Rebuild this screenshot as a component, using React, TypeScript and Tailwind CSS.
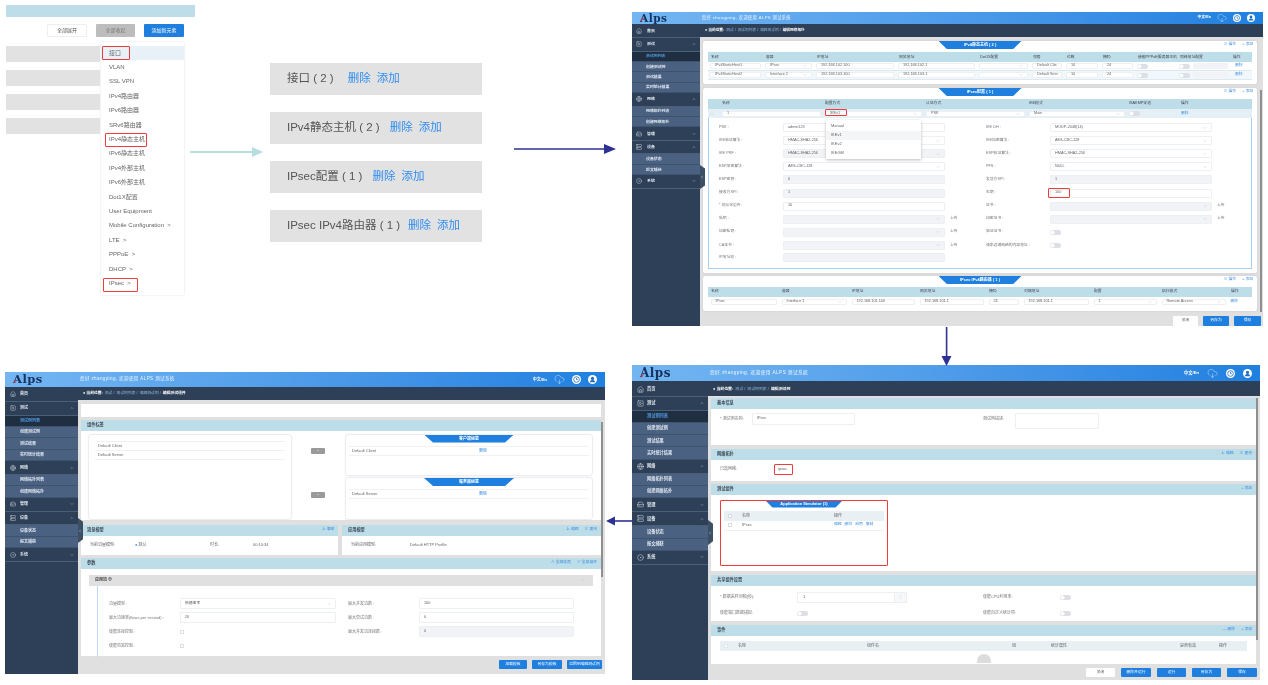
import React from "react";
import { Home, SquarePlay, Globe, Server, CircleDot, HardDrive, CloudDownload, ChevronDown, ChevronUp, ChevronLeft } from "lucide-react";

type Nav = { t: string; icon: React.ElementType; open?: boolean; sub?: string[]; active?: string };

const NAV: Nav[] = [
  { t: "首页", icon: Home },
  { t: "测试", icon: SquarePlay, open: true, sub: ["测试例列表", "创建测试例", "测试结果", "实时统计结果"], active: "测试例列表" },
  { t: "网络", icon: Globe, open: true, sub: ["网络拓扑列表", "创建网络拓扑"] },
  { t: "管理", icon: HardDrive, open: false },
  { t: "设备", icon: Server, open: true, sub: ["设备状态", "报文捕获"] },
  { t: "系统", icon: CircleDot, open: false },
];

function Sidebar({ w, mh, sh, ic, tx, pl, ipl, spl }: { w: string; mh: string; sh: string; ic: string; tx: string; pl: string; ipl: string; spl: string }) {
  return (
    <aside className={`${w} ${tx} shrink-0 bg-[#2e4057] text-[#dfe6ee]`}>
      {NAV.map((n) => {
        const Icon = n.icon;
        return (
          <div key={n.t}>
            <div className={`${mh} ${ipl} flex items-center border-b border-[#4a5e74] pr-[4px]`}>
              <Icon className={`${ic} shrink-0`} strokeWidth={1.6} />
              <span className={`${pl} flex-1 font-bold`}>{n.t}</span>
              {n.open === true && <ChevronUp className="h-[4px] w-[4px] text-[#9fb0c2]" strokeWidth={3} />}
              {n.open === false && <ChevronDown className="h-[4px] w-[4px] text-[#9fb0c2]" strokeWidth={3} />}
            </div>
            {n.sub?.map((s) => (
              <div
                key={s}
                className={`${sh} ${spl} flex items-center border-b border-[#3e536c] font-bold ${s === n.active ? "bg-[#1f2e40] text-[#4f97dd]" : "bg-[#4a6182]"}`}
              >
                {s}
              </div>
            ))}
          </div>
        );
      })}
    </aside>
  );
}

function HeaderBar({ h, logo, lw, tx, rtx, pl, gap, ico, cloud }: { h: string; logo: string; lw: string; tx: string; rtx: string; pl: string; gap: string; ico: string; cloud: string }) {
  return (
    <header className={`${h} flex shrink-0 items-center bg-gradient-to-r from-[#74b6f2] to-[#1f80e0] text-white`}>
      <div className={`${lw} ${logo} ${pl} shrink-0 font-['DejaVu_Serif',serif] font-bold leading-none tracking-[0.5px] text-[#16325f]`}>
        <span className="relative">
          A
          <span className="absolute bottom-[30%] left-[5%] h-[1px] w-[45%] -rotate-45 bg-[#d33]" />
        </span>
        lps
      </div>
      <div className={`${tx} ml-[2px] flex-1 tracking-[0.4px] text-[#eef6ff]`}>您好 zhangping, 欢迎使用 ALPS 测试系统</div>
      <div className={`${rtx} ${gap} flex items-center pr-[8px] font-bold`}>
        <span>中文/En</span>
        <CloudDownload className={`${cloud} text-[#dcecff]`} strokeWidth={1} />
        <svg viewBox="0 0 16 16" className={ico}>
          <circle cx="8" cy="8" r="8" fill="#fff" />
          <circle cx="8" cy="8" r="5" fill="none" stroke="#1f6fc4" strokeWidth="1.4" />
          <path d="M8 5v3.4h2.2" fill="none" stroke="#1f6fc4" strokeWidth="1.4" />
        </svg>
        <svg viewBox="0 0 16 16" className={ico}>
          <circle cx="8" cy="8" r="8" fill="#fff" />
          <circle cx="8" cy="6" r="2.8" fill="#1f6fc4" />
          <path d="M3 13c1-3 3-4 5-4s4 1 5 4z" fill="#1f6fc4" />
        </svg>
      </div>
    </header>
  );
}

function Crumb({ h, tx, path }: { h: string; tx: string; path: string[] }) {
  return (
    <div className={`${h} ${tx} flex shrink-0 items-center bg-[#2e4057] pl-[5px] text-[#8fb8dd]`}>
      <span className="font-bold text-white">● 当前位置:</span>
      {path.map((p, i) => (
        <span key={p} className={`ml-[2px] ${i === path.length - 1 ? "font-bold text-white" : ""}`}>
          {p}
          {i < path.length - 1 ? " /" : ""}
        </span>
      ))}
    </div>
  );
}

function Trap({ w, h, t }: { w: string; h: string; t: string }) {
  return (
    <div className={`${w} ${h} mx-auto flex items-center justify-center bg-[#1e7fdf] text-[4px] font-bold text-white [clip-path:polygon(0_0,100%_0,90%_100%,10%_100%)]`}>
      {t}
    </div>
  );
}

function Chev() {
  return <ChevronDown className="h-[4px] w-[4px] shrink-0 text-[#b8bec6]" strokeWidth={2.4} />;
}

function Box({ t, sel, off, c = "" }: { t?: string; sel?: boolean; off?: boolean; c?: string }) {
  return (
    <div className={`bx flex h-[6px] items-center justify-between rounded-[1px] border border-[#edf0f3] px-[4px] text-[3.8px] text-[#666] ${off ? "bg-[#f1f3f6]" : "bg-white"} ${c}`}>
      <span className="whitespace-nowrap">{t}</span>
      {sel && <Chev />}
    </div>
  );
}

function Toggle({ c = "" }: { c?: string }) {
  return (
    <div className={`h-[5px] w-[11px] rounded-full bg-[#dcdfe6] ${c}`}>
      <div className="h-[4px] w-[4px] translate-x-[0.5px] translate-y-[0.5px] rounded-full bg-white" />
    </div>
  );
}

function Links({ items }: { items: string[] }) {
  return (
    <div className="flex justify-end gap-[6px] pr-[4px] text-[3.8px] font-normal text-[#3b8ce0]">
      {items.map((i) => (
        <span key={i}>{i}</span>
      ))}
    </div>
  );
}

function CardHead({ t, w, links }: { t: string; w: string; links: string[] }) {
  return (
    <div className="grid h-[8px] grid-cols-[1fr_auto_1fr] items-center">
      <div />
      <Trap w={w} h="h-[8px]" t={t} />
      <Links items={links} />
    </div>
  );
}

const HEAD = "h-[10px] items-center bg-[#bddde8] text-[3.8px] text-[#445]";

function Hostrow({ a, b, c, d, tint }: { a: string; b: string; c: string; d: string; tint?: boolean }) {
  return (
    <div className={`grid h-[9px] grid-cols-[55px_51px_82px_81px_53px_34px_36px_35px_42px_53px_23px] items-center border-b border-[#dde9ef] ${tint ? "bg-[#f1f8fb]" : "bg-white"} [&>*]:mx-[2px]`}>
      <Box t={a} />
      <Box t={b} sel />
      <Box t={c} />
      <Box t={d} />
      <Box sel />
      <Box t={a.endsWith("1") ? "Default Clie" : "Default Serv"} />
      <Box t="10" />
      <Box t="24" />
      <Toggle c="ml-[7px]" />
      <div className="flex items-center gap-[3px]">
        <Toggle />
        <div className="h-[6px] flex-1 rounded-[1px] bg-[#f1f3f6]" />
      </div>
      <span className="pl-[3px] text-[3.8px] text-[#3b8ce0]">删除</span>
    </div>
  );
}

function Field({ l, children, req }: { l: string; children?: React.ReactNode; req?: boolean }) {
  return (
    <>
      <div className="whitespace-nowrap text-[3.8px] text-[#777]">
        {req && <span className="text-[#e33]">* </span>}
        {l}
      </div>
      {children}
    </>
  );
}

function Upload() {
  return <span className="pl-[5px] text-[3.8px] text-[#777]">上传</span>;
}

function Handle({ c }: { c: string }) {
  return (
    <div className={`absolute flex w-[5px] items-center bg-[#3c4f63] [clip-path:polygon(0_0,100%_15%,100%_85%,0_100%)] ${c}`}>
      <ChevronLeft className="h-[4px] w-[4px] text-[#cfd8e0]" strokeWidth={3} />
    </div>
  );
}

function Window1() {
  const rows: [React.ReactNode, React.ReactNode][] = [
    [<Field l="PSK :"><Box t="admin123" /></Field>, <Field l="IKE DH :"><Box t="MODP-2048(14)" sel /></Field>],
    [<Field l="IKE验证算法 :"><Box t="HMAC-SHA2-256" sel /></Field>, <Field l="IKE加密算法 :"><Box t="AES-CBC-128" sel /></Field>],
    [<Field l="IKE PRF :"><Box t="HMAC-SHA2-256" sel off /></Field>, <Field l="ESP验证算法 :"><Box t="HMAC-SHA2-256" sel /></Field>],
    [<Field l="ESP加密算法 :"><Box t="AES-CBC-128" sel /></Field>, <Field l="PFS :"><Box t="NULL" sel /></Field>],
    [<Field l="ESP密钥 :"><Box t="0" off /></Field>, <Field l="发送方SPI :"><Box t="1" off /></Field>],
    [<Field l="接收方SPI :"><Box t="1" off /></Field>, <Field l="生期 :"><Box t="100" /></Field>],
    [<Field l="初始化重传 :" req><Box t="10" /></Field>, <Field l="证书 :"><Box sel off /></Field>],
    [<Field l="私钥 :"><Box sel off /></Field>, <Field l="加密证书 :"><Box sel off /></Field>],
    [<Field l="加密私钥 :"><Box sel off /></Field>, <Field l="验证证书 :"><Toggle /></Field>],
    [<Field l="CA证书 :"><Box sel off /></Field>, <Field l="请求远端网络的内部地址 :"><Toggle /></Field>],
    [<Field l="IP地址池 :"><Box off /></Field>, <div className="col-span-3" />],
  ];
  const uploads = [7, 8, 9];
  const upRight = [6, 7];
  return (
    <section className="absolute left-[632px] top-[12px] flex h-[314px] w-[631px] flex-col overflow-hidden bg-[#e0e0e0]">
      <HeaderBar h="h-[12px]" logo="text-[10.5px]" lw="w-[68px]" tx="text-[4.2px]" rtx="text-[3.8px]" pl="pl-[8px]" gap="gap-[6px]" ico="h-[8px] w-[8px]" cloud="h-[10px] w-[10px]" />
      <div className="relative flex min-h-0 flex-1">
        <Sidebar w="w-[68px] pt-[0.5px]" mh="h-[13.5px]" sh="h-[10.4px]" ic="h-[6px] w-[6px]" tx="text-[3.9px]" pl="pl-[5px]" ipl="pl-[4px]" spl="pl-[14px]" />
        <div className="min-w-0 flex-1">
          <Crumb h="h-[13px]" tx="text-[3.7px]" path={["测试", "测试例列表", "编辑测试例", "编辑网络拓扑"]} />
          <div className="pl-[3px] pt-[4px]">
            <div className="h-[43px] w-[554px] rounded-[2px] bg-white shadow-[0_0_2px_#c4c4c4]">
              <CardHead t="IPv4静态主机 ( 2 )" w="w-[83px]" links={["三 操作", "+ 添加"]} />
              <div className="mx-[5px] mt-[3px]">
                <div className={`grid grid-cols-[55px_51px_82px_81px_53px_34px_36px_35px_42px_53px_23px] ${HEAD}`}>
                  {["名称", "容器", "IP地址", "网关地址", "Dot1X配置", "邻居", "位数", "掩码", "使能PPPoE服务器主机", "同缘地址配置", "操作"].map((h) => (
                    <span key={h} className="pl-[3px] leading-[4px]">{h}</span>
                  ))}
                </div>
                <Hostrow a="IPv4StaticHost1" b="IPsec" c="192.168.102.100" d="192.168.102.1" />
                <Hostrow a="IPv4StaticHost2" b="Interface 2" c="192.168.103.100" d="192.168.103.1" tint />
              </div>
            </div>
            <div className="mt-[4px] h-[185px] w-[554px] rounded-[2px] bg-white shadow-[0_0_2px_#c4c4c4]">
              <CardHead t="IPsec配置 ( 1 )" w="w-[83px]" links={["三 操作", "+ 添加"]} />
              <div className="mx-[5px] mt-[3px]">
                <div className={`grid grid-cols-[12px_103px_101px_103px_100px_52px_74px] ${HEAD}`}>
                  {["", "名称", "配置方式", "认证方式", "IKE模式", "ISAKMP穿透", "操作"].map((h, i) => (
                    <span key={i} className="pl-[2px]">{h}</span>
                  ))}
                </div>
                <div className="grid h-[9px] grid-cols-[12px_103px_101px_103px_100px_52px_74px] items-center bg-[#e4f0f5] [&>*]:mx-[2px]">
                  <ChevronDown className="h-[4px] w-[4px] text-[#aaa]" />
                  <Box t="1" />
                  <Box t="IKEv1" sel />
                  <Box t="PSK" sel />
                  <Box t="Main" sel />
                  <Toggle c="ml-[4px]" />
                  <span className="text-[3.8px] text-[#3b8ce0]">删除</span>
                </div>
                <div className="h-[151px] border border-t-0 border-[#a8d0ee] bg-white pt-[3px] [&_.bx]:!h-[9px]">
                  {rows.map((r, i) => (
                    <div key={i} className="grid h-[13.1px] grid-cols-[10px_64px_162px_41px_64px_162px_38px] items-center">
                      <div />
                      {r[0]}
                      {uploads.includes(i) ? <Upload /> : <div />}
                      {r[1]}
                      {upRight.includes(i) ? <Upload /> : <div />}
                    </div>
                  ))}
                </div>
              </div>
            </div>
            <div className="mt-[3px] h-[35px] w-[554px] rounded-[2px] bg-white shadow-[0_0_2px_#c4c4c4]">
              <CardHead t="IPsec IPv4路由器 ( 1 )" w="w-[83px]" links={["三 操作", "+ 添加"]} />
              <div className="mx-[5px] mt-[3px]">
                <div className={`grid grid-cols-[71px_70px_68px_69px_35px_70px_68px_69px_25px] ${HEAD}`}>
                  {["名称", "容器", "IP地址", "网关地址", "掩码", "对端地址", "配置", "拓扑模式", "操作"].map((h) => (
                    <span key={h} className="pl-[3px]">{h}</span>
                  ))}
                </div>
                <div className="grid h-[9px] grid-cols-[71px_70px_68px_69px_35px_70px_68px_69px_25px] items-center bg-white [&>*]:mx-[2.5px]">
                  <Box t="IPsec" />
                  <Box t="Interface 1" sel />
                  <Box t="192.168.101.100" />
                  <Box t="192.168.101.1" />
                  <Box t="24" />
                  <Box t="192.168.101.1" />
                  <Box t="1" sel />
                  <Box t="Remote Access" sel />
                  <span className="text-[3.8px] text-[#3b8ce0]">删除</span>
                </div>
              </div>
            </div>
            <div className="mt-[5px] flex w-[558px] justify-end gap-[5px]">
              <Btn t="关闭" w="w-[25px]" h="h-[10px]" white />
              <Btn t="另存为" w="w-[26px]" h="h-[10px]" />
              <Btn t="保存" w="w-[27px]" h="h-[10px]" />
            </div>
          </div>
        </div>
        <div className="absolute left-[628px] top-[66px] h-[222px] w-[2px] bg-[#8f8f8f]" />
        <Handle c="left-[68px] top-[141px] h-[24px]" />
      </div>
    </section>
  );
}

function Btn({ t, w, h, white }: { t: string; w: string; h: string; white?: boolean }) {
  return (
    <div className={`${w} ${h} flex items-center justify-center rounded-[1px] text-[3.8px] ${white ? "bg-white text-[#555]" : "bg-[#1e7fdf] text-white"}`}>{t}</div>
  );
}

function Section({ t, links, h, children, c = "" }: { t: string; links?: string[]; h: string; children?: React.ReactNode; c?: string }) {
  return (
    <div className={`${h} ${c} bg-white`}>
      <div className="flex h-[10.5px] items-center justify-between bg-[#bddde8] pl-[6px] text-[4.2px] font-bold text-[#3c4a55]">
        <span>{t}</span>
        {links && <Links items={links} />}
      </div>
      {children}
    </div>
  );
}

function LabelBox({ children, c = "" }: { children: React.ReactNode; c?: string }) {
  return <div className={`whitespace-nowrap text-[4px] text-[#777] ${c}`}>{children}</div>;
}

function Window3() {
  return (
    <section className="absolute left-[5px] top-[372px] flex h-[302px] w-[600px] flex-col overflow-hidden bg-[#e0e0e0]">
      <HeaderBar h="h-[15px]" logo="text-[11.5px]" lw="w-[73px]" tx="text-[4.5px]" rtx="text-[4px]" pl="pl-[8px]" gap="gap-[7px]" ico="h-[9px] w-[9px]" cloud="h-[11px] w-[11px]" />
      <div className="relative flex min-h-0 flex-1">
        <Sidebar w="w-[73px] pt-[1px]" mh="h-[13.8px]" sh="h-[11.4px]" ic="h-[6px] w-[6px]" tx="text-[4px]" pl="pl-[4px]" ipl="pl-[5px]" spl="pl-[15px]" />
        <div className="flex min-w-0 flex-1 flex-col">
          <Crumb h="h-[13px]" tx="text-[3.8px]" path={["测试", "测试例列表", "编辑测试例", "编辑测试组件"]} />
          <div className="flex min-h-0 flex-1 flex-col pl-[3px] pr-[4px] pt-[4px]">
            <div className="h-[13px] bg-white" />
            <Section t="组件标签" h="h-[100px]" c="mt-[3px]">
              <div className="flex gap-[20px] px-[8px] pt-[4px]">
                <div className="h-[84px] w-[202px] rounded-[2px] bg-white px-[6px] pt-[6px] text-[4px] text-[#666] shadow-[0_0_2px_#b4bcc4]">
                  <div className="flex h-[10px] items-center border-y border-[#f0f0f0] pl-[3px]">Default Client</div>
                  <div className="flex h-[9px] items-center border-b border-[#f0f0f0] pl-[3px]">Default Server</div>
                </div>
                <div className="flex w-[14px] flex-col items-center">
                  <div className="mt-[13px] flex h-[6px] w-[14px] items-center justify-center rounded-[1px] bg-[#9a9a9a] text-[3.5px] text-white">→</div>
                  <div className="mt-[38px] flex h-[6px] w-[14px] items-center justify-center rounded-[1px] bg-[#9a9a9a] text-[3.5px] text-white">→</div>
                </div>
                <div className="ml-[1px] flex w-[246px] flex-col gap-[3px]">
                  {[["客户端标签", "Default Client"], ["服务器标签", "Default Server"]].map(([a, b]) => (
                    <div key={a} className="h-[40.5px] rounded-[2px] bg-white shadow-[0_0_2px_#b4bcc4]">
                      <Trap w="w-[90px]" h="h-[8px]" t={a} />
                      <div className="mx-[3px] mt-[3px] grid h-[10px] grid-cols-[127px_1fr] items-center border-y border-[#f2f2f2] pl-[3px] text-[4px] text-[#666]">
                        <span>{b}</span>
                        <span className="text-[#3b8ce0]">删除</span>
                      </div>
                    </div>
                  ))}
                </div>
              </div>
            </Section>
            <div className="mt-[5px] grid h-[30px] grid-cols-[257px_259px] gap-[4px]">
              <Section t="流量模型" h="h-[30px]" links={["上 编辑"]}>
                <div className="grid grid-cols-[45px_75px_43px_1fr] pl-[9px] pt-[6px] text-[4px] text-[#666]">
                  <span>当前流量模型:</span>
                  <span><span className="text-[#3b8ce0]">● </span>默认</span>
                  <span>时长:</span>
                  <span>00:10:34</span>
                </div>
              </Section>
              <Section t="应用模型" h="h-[30px]" links={["上 编辑", "三 更改"]}>
                <div className="grid grid-cols-[59px_1fr] pl-[9px] pt-[6px] text-[4px] text-[#666]">
                  <span>当前应用模型:</span>
                  <span>Default HTTP Profile</span>
                </div>
              </Section>
            </div>
            <Section t="参数" h="h-[98px]" c="mt-[3px]" links={["∧ 全部收起", "∨ 全部展开"]}>
              <div className="mx-[8px] mt-[6px] flex h-[11px] items-center justify-between bg-[#e0e0e0] pl-[6px] pr-[8px] text-[4px] font-bold text-[#444]">
                <span>应用流 ⊕</span>
                <Chev />
              </div>
              <div className="ml-[16px] h-[71px] border-l-[1.5px] border-[#bcd8f4] pl-[11px] pt-[11px]">
                <div className="grid grid-cols-[71px_156px_12px_71px_155px] grid-rows-[14px_14px_14px_14px] items-center">
                  <LabelBox>流量模型 :</LabelBox>
                  <div><Box t="新建速率" sel c="!h-[11px]" /></div>
                  <div />
                  <LabelBox>最大并发流数 :</LabelBox>
                  <Box t="100" c="!h-[11px]" />
                  <LabelBox>最大流速率(flows per second) :</LabelBox>
                  <Box t="20" c="!h-[11px]" />
                  <div />
                  <LabelBox>最大尝试流数 :</LabelBox>
                  <Box t="0" c="!h-[11px]" />
                  <LabelBox>使能连接控制 :</LabelBox>
                  <div className="h-[4px] w-[4px] rounded-[0.5px] border border-[#dcdfe6]" />
                  <div />
                  <LabelBox>最大并发流连接数 :</LabelBox>
                  <Box t="0" off c="!h-[11px]" />
                  <LabelBox>使能带宽控制 :</LabelBox>
                  <div className="h-[4px] w-[4px] rounded-[0.5px] border border-[#dcdfe6]" />
                </div>
              </div>
            </Section>
            <div className="-mr-[1px] mt-[4px] flex justify-end gap-[5px]">
              <Btn t="加载模板" w="w-[28px]" h="h-[9px]" />
              <Btn t="另存为模板" w="w-[30px]" h="h-[9px]" />
              <Btn t="返回到编辑测试例" w="w-[35px]" h="h-[9px]" />
            </div>
          </div>
        </div>
        <div className="absolute left-[596px] top-[35px] h-[155px] w-[2px] bg-[#8f8f8f]" />
        <Handle c="left-[73px] top-[131px] h-[25px]" />
      </div>
    </section>
  );
}

function Window4() {
  return (
    <section className="absolute left-[632px] top-[365px] flex h-[315px] w-[628px] flex-col overflow-hidden bg-[#e0e0e0]">
      <HeaderBar h="h-[16px]" logo="text-[12px]" lw="w-[76px]" tx="text-[4.7px]" rtx="text-[4.2px]" pl="pl-[8px]" gap="gap-[8px]" ico="h-[9px] w-[9px]" cloud="h-[11px] w-[11px]" />
      <div className="relative flex min-h-0 flex-1">
        <Sidebar w="w-[76px] pt-[1.5px]" mh="h-[14px]" sh="h-[12.3px]" ic="h-[7px] w-[7px]" tx="text-[4.2px]" pl="pl-[3px]" ipl="pl-[5px]" spl="pl-[15px]" />
        <div className="flex min-w-0 flex-1 flex-col">
          <Crumb h="h-[15px]" tx="text-[3.9px]" path={["测试", "测试例列表", "编辑测试例"]} />
          <div className="flex min-h-0 flex-1 flex-col pl-[3px] pr-[4px] pt-[2px]">
            <Section t="基本信息" h="h-[47px]">
              <div className="grid grid-cols-[9px_32px_103px_128px_32px_84px] items-start pt-[4px]">
                <div />
                <LabelBox c="pt-[3px]"><span className="text-[#e33]">* </span>测试例名称:</LabelBox>
                <Box t="IPsec" c="!h-[12px]" />
                <div />
                <LabelBox c="pt-[3px]">测试例描述:</LabelBox>
                <Box c="!h-[16px]" />
              </div>
            </Section>
            <Section t="网络拓扑" h="h-[32px]" c="mt-[4px]" links={["上 编辑", "三 更改"]}>
              <div className="grid grid-cols-[9px_54px_1fr] items-center pt-[6px]">
                <div />
                <LabelBox>已选网络:</LabelBox>
                <span className="pl-[4px] text-[4px] text-[#666]">ipsec</span>
              </div>
            </Section>
            <Section t="测试组件" h="h-[87px]" c="mt-[3px]" links={["+ 添加"]}>
              <div className="ml-[9px] w-[168px] pt-[5px]">
                <Trap w="w-[79px]" h="h-[8px]" t="Application Simulator (1)" />
                <div className="mx-[4px] mt-[3px] grid h-[10px] grid-cols-[14px_92px_1fr] items-center bg-[#e8f0f3] pl-[4px] text-[4px] text-[#666]">
                  <div className="h-[4px] w-[4px] rounded-[0.5px] border border-[#d8dde2] bg-white" />
                  <span>名称</span>
                  <span>操作</span>
                </div>
                <div className="mx-[4px] grid h-[10px] grid-cols-[14px_92px_1fr] items-center border-b border-[#f0f0f0] pl-[4px] text-[4px] text-[#666]">
                  <div className="h-[4px] w-[4px] rounded-[0.5px] border border-[#d8dde2] bg-white" />
                  <span>IPsec</span>
                  <span className="flex gap-[3px] text-[3.8px] text-[#3b8ce0]">
                    <span>编辑</span><span>删除</span><span>启用</span><span>复制</span>
                  </span>
                </div>
              </div>
            </Section>
            <Section t="共享组件设置" h="h-[46px]" c="mt-[4px]">
              <div className="grid grid-cols-[9px_77px_110px_76px_77px_1fr] grid-rows-[15px_17px] items-center pt-[4px]">
                <div />
                <LabelBox><span className="text-[#e33]">* </span>数据采样间隔(秒):</LabelBox>
                <div className="flex h-[11px] items-center justify-between rounded-[1px] border border-[#edf0f3] pl-[5px] text-[4px] text-[#666]">
                  <span>1</span>
                  <span className="flex h-full w-[12px] flex-col items-center justify-center border-l border-[#edf0f3] bg-[#f7f8fa]">
                    <ChevronUp className="h-[3px] w-[3px] text-[#aaa]" />
                    <ChevronDown className="h-[3px] w-[3px] text-[#aaa]" />
                  </span>
                </div>
                <div />
                <LabelBox>使能CPU利用率:</LabelBox>
                <Toggle />
                <div />
                <LabelBox>使能端口数据捕捉:</LabelBox>
                <Toggle />
                <div />
                <LabelBox>使能自定义统计项:</LabelBox>
                <Toggle />
              </div>
            </Section>
            <Section t="事件" h="h-[39px]" c="mt-[4px]" links={["— 删除", "+ 添加"]}>
              <div className="mx-[9px] mt-[5px] grid h-[10px] grid-cols-[14px_129px_145px_39px_129px_36px_1fr] items-center bg-[#e8f0f3] pl-[4px] text-[4px] text-[#666]">
                <div className="h-[4px] w-[4px] rounded-[0.5px] border border-[#e2e6ea] bg-white" />
                <span>名称</span>
                <span>组件名</span>
                <span>组</span>
                <span>统计属性</span>
                <span>是否有效</span>
                <span className="pl-[3px]">操作</span>
              </div>
              <div className="relative mx-auto mt-[2px] h-[10px] w-[14px] overflow-hidden">
                <div className="mx-auto mt-[1px] h-[14px] w-[14px] rounded-full bg-[#dcdcdc]" />
              </div>
            </Section>
            <div className="-mr-[1px] mt-[4px] flex justify-end gap-[6px]">
              <Btn t="关闭" w="w-[29px]" h="h-[9px]" white />
              <Btn t="删除并运行" w="w-[30px]" h="h-[9px]" />
              <Btn t="运行" w="w-[29px]" h="h-[9px]" />
              <Btn t="另存为" w="w-[29px]" h="h-[9px]" />
              <Btn t="保存" w="w-[30px]" h="h-[9px]" />
            </div>
          </div>
        </div>
        <div className="absolute left-[624px] top-[17px] h-[242px] w-[1.5px] bg-[#8f8f8f]" />
        <Handle c="left-[76px] top-[139px] h-[25px]" />
      </div>
    </section>
  );
}

const MENU = [
  "接口", "VLAN", "SSL VPN", "IPv4路由器", "IPv6路由器", "SRv6路由器", "IPv4静态主机", "IPv6静态主机", "IPv4外部主机", "IPv6外部主机", "Dot1X配置", "User Equipment",
  "Mobile Configuration  >", "LTE  >", "PPPoE  >", "DHCP  >", "IPsec  >",
];

function TopLeft() {
  return (
    <section className="absolute left-[6px] top-[5px] w-[189px]">
      <div className="h-[12px] bg-[#bddde8]" />
      <div className="mt-[7px] flex justify-end gap-[9px] pr-[11px] text-[5px]">
        <div className="flex h-[13px] w-[40px] items-center justify-center rounded-[1px] border border-[#eeeeee] bg-white text-[#555]">全部展开</div>
        <div className="flex h-[13px] w-[39px] items-center justify-center rounded-[1px] bg-[#bdbdbd] text-[#777]">全部收起</div>
        <div className="flex h-[13px] w-[40px] items-center justify-center rounded-[1px] bg-[#1e7fdf] text-white">添加新元素</div>
      </div>
      <div className="mt-[9px] flex w-[94px] flex-col gap-[8px]">
        <div className="h-[16px] bg-[#e2e2e2]" />
        <div className="h-[16px] bg-[#e2e2e2]" />
        <div className="h-[16px] bg-[#e2e2e2]" />
        <div className="h-[16px] bg-[#e2e2e2]" />
      </div>
      <div className="absolute left-[95px] top-[37px] h-[253px] w-[83px] bg-white pt-[4px] text-[6px] text-[#666] shadow-[0_0_2px_#ddd]">
        {MENU.map((m, i) => (
          <div key={m} className={`flex h-[14.4px] items-center whitespace-pre pl-[8px] ${i === 0 ? "bg-[#e8f0f8]" : ""}`}>{m}</div>
        ))}
      </div>
    </section>
  );
}

const CARDS = [
  { t: "接口 ( 2 )", gap: "ml-[14px]" },
  { t: "IPv4静态主机 ( 2 )", gap: "ml-[10px]" },
  { t: "IPsec配置 ( 1 )", gap: "ml-[10px]" },
  { t: "IPsec IPv4路由器 ( 1 )", gap: "ml-[8px]" },
];

function MidCards() {
  return (
    <section className="absolute left-[270px] top-[63px] flex w-[212px] flex-col gap-[17px]">
      {CARDS.map((c) => (
        <div key={c.t} className="flex h-[32px] items-center bg-[#e2e2e2] pl-[17px] text-[11.5px] text-[#555]">
          <span>{c.t}</span>
          <span className={`${c.gap} text-[#2f8cf0]`}>删除</span>
          <span className="ml-[6px] text-[#2f8cf0]">添加</span>
        </div>
      ))}
    </section>
  );
}

function Red({ c }: { c: string }) {
  return <div className={`absolute rounded-[1px] border-[1.5px] border-[#ee3b3b] ${c}`} />;
}

export default function App() {
  return (
    <main className="relative h-[685px] w-[1268px] overflow-hidden bg-white font-['Liberation_Sans','Noto_Sans_CJK_SC',sans-serif] [filter:blur(0.4px)]">
      <TopLeft />
      <MidCards />
      <Window1 />
      <Window3 />
      <Window4 />

      <div className="absolute left-[826px] top-[120px] h-[39px] w-[95px] bg-white pt-[1.5px] text-[4px] text-[#666] shadow-[0_1px_3px_#bbb]">
        {["Manual", "IKEv1", "IKEv2", "IKEGM"].map((o) => (
          <div key={o} className={`flex h-[9px] items-center pl-[5px] ${o === "IKEv1" ? "bg-[#f4f5f7]" : ""}`}>{o}</div>
        ))}
      </div>

      <Red c="left-[102px] top-[46px] h-[14px] w-[28px]" />
      <Red c="left-[105px] top-[133px] h-[14px] w-[42px]" />
      <Red c="left-[103px] top-[278px] h-[14px] w-[35px]" />
      <Red c="left-[825px] top-[109px] h-[7px] w-[22px]" />
      <Red c="left-[1048px] top-[188px] h-[10px] w-[22px]" />
      <Red c="left-[774px] top-[464px] h-[11px] w-[19px]" />
      <Red c="left-[720px] top-[500px] h-[66px] w-[168px]" />

      <svg className="absolute left-[190px] top-[145px] h-[14px] w-[73px]" viewBox="0 0 73 14">
        <path d="M0 6h62v2H0z" fill="#b6dde0" />
        <path d="M62 2l11 5-11 5z" fill="#b6dde0" />
      </svg>
      <svg className="absolute left-[514px] top-[143px] h-[12px] w-[102px]" viewBox="0 0 102 12">
        <path d="M0 5.2h90v1.6H0z" fill="#2e3192" />
        <path d="M90 1l12 5-12 5z" fill="#2e3192" />
      </svg>
      <svg className="absolute left-[941px] top-[327px] h-[39px] w-[11px]" viewBox="0 0 11 39">
        <path d="M4.8 0h1.6v30H4.8z" fill="#2e3192" />
        <path d="M0.5 29h10L5.5 39z" fill="#2e3192" />
      </svg>
      <svg className="absolute left-[606px] top-[516px] h-[10px] w-[27px]" viewBox="0 0 27 10">
        <path d="M9 4.2h18v1.6H9z" fill="#2e3192" />
        <path d="M9 0.5v9L0 5z" fill="#2e3192" />
      </svg>
    </main>
  );
}
